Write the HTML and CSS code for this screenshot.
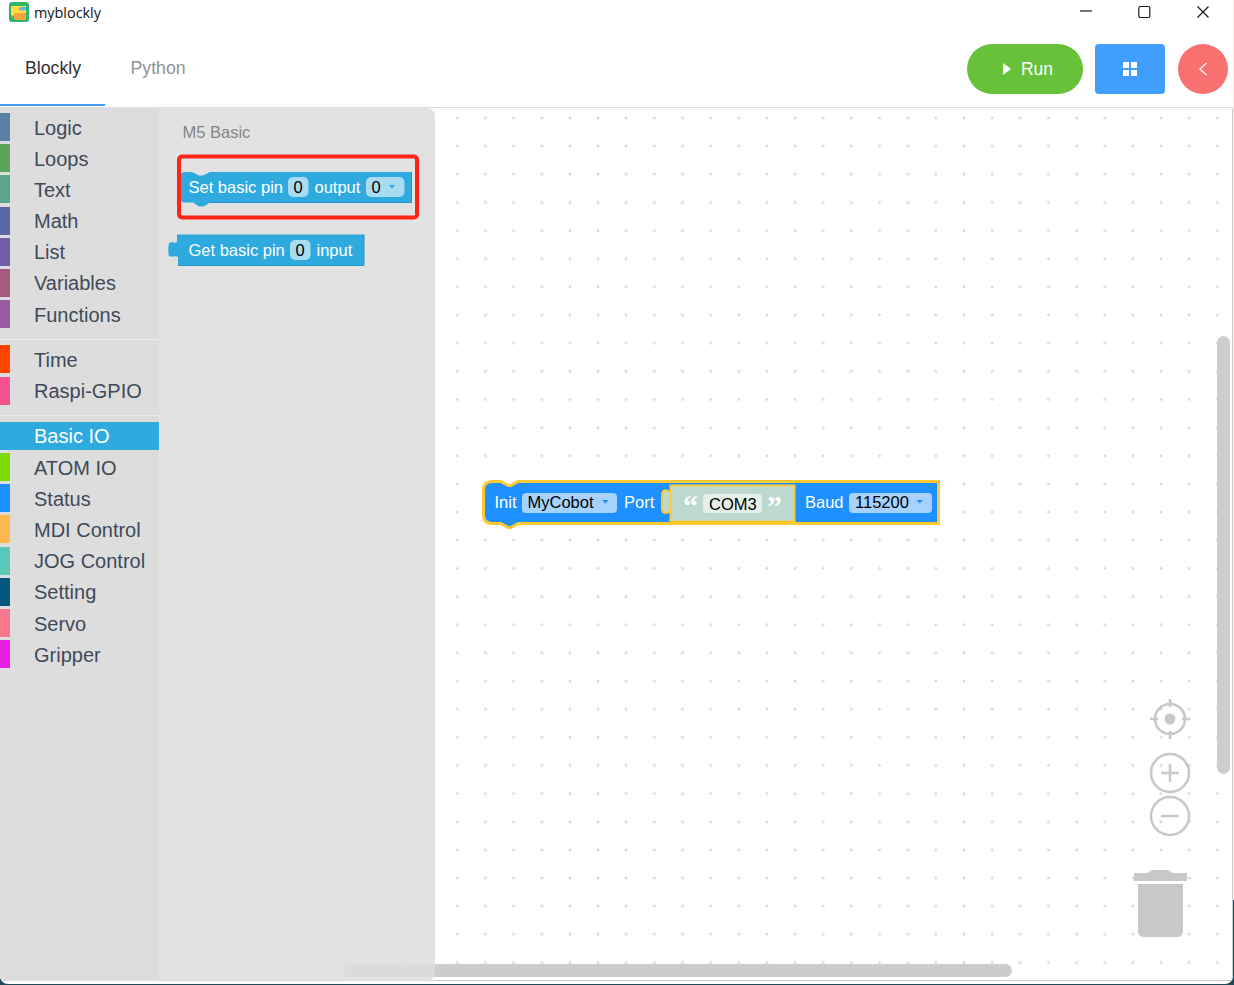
FILE: index.html
```html
<!DOCTYPE html>
<html lang="en">
<head>
<meta charset="utf-8">
<title>myblockly</title>
<link rel="stylesheet" href="styles.css">
</head>
<body>
<div class="window">
  <div class="titlebar">
    <svg class="app-icon" viewBox="0 0 20 20" width="20" height="20">
      <rect width="20" height="20" rx="3" fill="#2fb573"/>
      <path d="M2 4 H17 V13 H5 L3 15 V13 H2 Z" fill="#ffdf3e"/>
      <rect x="10" y="5" width="7" height="3.5" rx="1" fill="#6ab4e0"/>
      <path d="M5 11 H17 V18 H7 Q5 18 5 16 Z" fill="#f4a63b"/>
    </svg>
    <span class="app-name">myblockly</span>
    <div class="win-controls">
      <svg class="win-btn" viewBox="0 0 14 14"><path d="M1 6 H13" /></svg>
      <svg class="win-btn" viewBox="0 0 14 14"><rect x="0.800" y="1.500" width="11" height="11" rx="1.500"/></svg>
      <svg class="win-btn" viewBox="0 0 14 14"><path d="M1.500 1.500 L12.500 12.500 M12.500 1.500 L1.500 12.500"/></svg>
    </div>
  </div>

  <div class="tabbar">
    <div class="tab tab-active">Blockly</div>
    <div class="tab">Python</div>
    <div class="actions">
      <button class="btn btn-run">
        <svg viewBox="0 0 8 12" width="8" height="12"><path d="M0 0 L8 6 L0 12 Z" fill="#fff"/></svg>
        <span>Run</span>
      </button>
      <button class="btn btn-grid">
        <svg viewBox="0 0 14 14" width="14" height="14"><path d="M0 0 H6 V6 H0 Z M8 0 H14 V6 H8 Z M0 8 H6 V14 H0 Z M8 8 H14 V14 H8 Z" fill="#fff"/></svg>
      </button>
      <button class="btn btn-back">
        <svg viewBox="0 0 10 14" width="10" height="14"><path d="M8.500 1 L2 7 L8.500 13" fill="none" stroke="#fff" stroke-width="1.300"/></svg>
      </button>
    </div>
  </div>

  <div class="main">
    <nav class="toolbox">
      <div class="cat"><i class="tag c-logic"></i><span>Logic</span></div>
      <div class="cat"><i class="tag c-loops"></i><span>Loops</span></div>
      <div class="cat"><i class="tag c-text"></i><span>Text</span></div>
      <div class="cat"><i class="tag c-math"></i><span>Math</span></div>
      <div class="cat"><i class="tag c-list"></i><span>List</span></div>
      <div class="cat"><i class="tag c-vars"></i><span>Variables</span></div>
      <div class="cat"><i class="tag c-funcs"></i><span>Functions</span></div>
      <div class="sep"></div>
      <div class="cat"><i class="tag c-time"></i><span>Time</span></div>
      <div class="cat"><i class="tag c-gpio"></i><span>Raspi-GPIO</span></div>
      <div class="sep"></div>
      <div class="cat cat-on"><i class="tag c-basic"></i><span>Basic IO</span></div>
      <div class="cat"><i class="tag c-atom"></i><span>ATOM IO</span></div>
      <div class="cat"><i class="tag c-status"></i><span>Status</span></div>
      <div class="cat"><i class="tag c-mdi"></i><span>MDI Control</span></div>
      <div class="cat"><i class="tag c-jog"></i><span>JOG Control</span></div>
      <div class="cat"><i class="tag c-setting"></i><span>Setting</span></div>
      <div class="cat"><i class="tag c-servo"></i><span>Servo</span></div>
      <div class="cat"><i class="tag c-gripper"></i><span>Gripper</span></div>
    </nav>

    <div class="workspace">
      <svg class="grid" width="100%" height="100%">
        <defs>
          <pattern id="dots" x="16.800" y="10" width="28.150" height="28.150" patternUnits="userSpaceOnUse">
            <path d="M-1.500 0 H1.500 M0 -1.500 V1.500 M26.650 0 H29.650 M28.150 -1.500 V1.500 M-1.500 28.150 H1.500 M0 26.650 V29.650 M26.650 28.150 H29.650 M28.150 26.650 V29.650" stroke="#ccc" stroke-width="1"/>
          </pattern>
        </defs>
        <rect width="100%" height="100%" fill="url(#dots)"/>
      </svg>

      <svg class="init-block" viewBox="479 475 465 60" width="465" height="60">
        <path d="M483.500 490 Q483.500 481.500 492 481.500 H501 l7 4 h3 l7 -4 H938.500 V523.500 H518 l-7 4 h-3 l-7 -4 H492 Q483.500 523.500 483.500 515 Z" fill="#1e90ff" stroke="#ffc933" stroke-width="3"/>
        <text class="bt" x="494.500" y="508">Init</text>
        <rect x="522" y="493" width="95" height="20" rx="4" fill="#a5d2ff"/>
        <text class="ft" x="527.500" y="508">MyCobot</text>
        <path d="M602 500 h6.500 l-3.250 3.500 Z" fill="#1e90ff"/>
        <text class="bt" x="624" y="508">Port</text>
        <path d="M670 492 C666 489 662 490 662 495 V508 C662 514 666 514 670 511" fill="#bdd8cf" stroke="#ffc933" stroke-width="2"/>
        <rect x="670.500" y="485.500" width="124" height="36" fill="#bdd8cf" stroke="#ffc933" stroke-width="2"/>
        <text class="quote" x="683" y="516">“</text>
        <rect x="703" y="494" width="59" height="19" rx="4" fill="#e5f0ec"/>
        <text class="ft" x="709" y="510">COM3</text>
        <text class="quote" x="767" y="516">”</text>
        <text class="bt" x="805" y="508">Baud</text>
        <rect x="849" y="493" width="83" height="20" rx="4" fill="#a5d2ff"/>
        <text class="ft" x="855" y="508">115200</text>
        <path d="M916.500 500 h6.500 l-3.250 3.500 Z" fill="#1e90ff"/>
      </svg>

      <div class="scroll-v"></div>
      <div class="scroll-h"></div>

      <svg class="controls" viewBox="1125 695 70 250" width="70" height="250">
        <g fill="none" stroke="#bbb" stroke-width="2.500">
          <circle cx="1170" cy="719" r="15"/>
          <path d="M1170 699 V707 M1170 731 V739 M1150 719 H1158 M1182 719 H1190"/>
          <circle cx="1170" cy="773" r="19"/>
          <path d="M1170 764 V782 M1161 773 H1179"/>
          <circle cx="1170" cy="816" r="19"/>
          <path d="M1161 816 H1179"/>
        </g>
        <circle cx="1170" cy="719" r="5.500" fill="#bbb"/>
        <path d="M1134 873 H1148 Q1150 870 1153 870 H1167 Q1170 870 1172 873 H1187 V881 H1134 Z" fill="#bbb"/>
        <path d="M1138 884 H1183 V931 Q1183 937 1177 937 H1144 Q1138 937 1138 931 Z" fill="#bbb"/>
      </svg>

      <svg class="flyout" viewBox="159 108 276 873" width="276" height="873">
        <text class="fly-title" x="182.500" y="137.500">M5 Basic</text>

        <path d="M180 177 Q180 172 185 172 H192 l7 3.500 h4 l7 -3.500 H411.500 V202.500 H210 l-6 4 h-5 l-6 -4 H185 Q180 202.500 180 198 Z" fill="#2eaadf"/>
        <path d="M411.500 172 V202.500 H210" fill="none" stroke="#2793c4"/>
        <text class="bt" x="188.500" y="193">Set basic pin</text>
        <rect x="288" y="177" width="20.500" height="20" rx="5" fill="#a9dcf3"/>
        <text class="ft" x="293.500" y="193">0</text>
        <text class="bt" x="314.500" y="193">output</text>
        <rect x="366" y="177" width="38.500" height="20" rx="5" fill="#a9dcf3"/>
        <text class="ft" x="371.500" y="193">0</text>
        <path d="M389 185 h6 l-3 3.500 Z" fill="#2eaadf"/>

        <path d="M177 234.500 H364 V265.500 H178 V257 C175 255 172 258 169 256 Q167.500 250 169 243 C172 241 175 244 177 242 Z" fill="#2eaadf"/>
        <path d="M364 234.500 V265.500 H178" fill="none" stroke="#2793c4"/>
        <text class="bt" x="188.500" y="256">Get basic pin</text>
        <rect x="290" y="240" width="20.500" height="20" rx="5" fill="#a9dcf3"/>
        <text class="ft" x="295.500" y="256">0</text>
        <text class="bt" x="316.500" y="256">input</text>

        <rect x="179" y="156.500" width="238" height="61" rx="3" fill="none" stroke="#ff2318" stroke-width="4"/>
      </svg>
    </div>
  </div>
</div>
</body>
</html>
```

FILE: styles.css
```css
* { box-sizing: border-box; }

html, body {
  margin: 0;
  padding: 0;
  height: 985px;
  overflow: hidden;
}

body {
  background: linear-gradient(to bottom, #f3efe8 0, #f3efe8 900px, #1f4a55 900px);
  font-family: "Liberation Sans", Arial, sans-serif;
}

.window {
  width: 1233px;
  height: 984px;
  background: #fff;
  border-radius: 0 0 8px 8px;
  display: flex;
  flex-direction: column;
  padding-bottom: 3px;
  overflow: hidden;
}

/* Title bar */
.titlebar {
  height: 36px;
  display: flex;
  align-items: flex-start;
  padding: 2px 0 0 9px;
  flex: none;
}

.app-icon { flex: none; }

.app-name {
  margin-left: 5px;
  font: 14.400px/22px "Open Sans", "Noto Sans", sans-serif;
  color: #111;
}

.win-controls {
  margin-left: auto;
  display: flex;
  gap: 44.500px;
  padding: 3px 23px 0 0;
}

.win-btn {
  width: 14px;
  height: 14px;
  fill: none;
  stroke: #1a1a1a;
  stroke-width: 1.200;
}

/* Tab bar */
.tabbar {
  height: 72px;
  flex: none;
  display: flex;
  align-items: flex-start;
  border-bottom: 1px solid #ddd;
}

.tab {
  height: 70px;
  padding: 0 24px 0 25px;
  font-size: 17.700px;
  line-height: 64px;
  color: #909399;
}

.tab + .tab { padding-left: 25.500px; }

.tab-active {
  color: #303133;
  border-bottom: 2px solid #409eff;
}

.actions {
  margin-left: auto;
  display: flex;
  align-items: flex-start;
  gap: 12px;
  padding: 8px 5px 0 0;
}

.btn {
  height: 50px;
  border: 0;
  padding: 0;
  display: flex;
  align-items: center;
  justify-content: center;
  color: #fff;
  font-family: inherit;
}

.btn-run {
  width: 116px;
  padding-left: 6px;
  border-radius: 25px;
  background: #67c23a;
  font-size: 17.500px;
  gap: 10px;
}

.btn-grid {
  width: 70px;
  border-radius: 4px;
  background: #409eff;
}

.btn-back {
  width: 50px;
  border-radius: 50%;
  background: #f97070;
  margin-left: 1px;
}

/* Main area */
.main {
  flex: 1;
  display: flex;
  min-height: 0;
}

.toolbox {
  width: 159px;
  flex: none;
  background: #ddd;
  padding-top: 5px;
}

.cat {
  height: 28px;
  margin-bottom: 3.200px;
  display: flex;
  align-items: center;
  font-size: 20px;
  color: #3e4a5a;
}

.cat span {
  margin-left: 24px;
  padding-top: 2px;
}

.tag {
  width: 10px;
  height: 100%;
  flex: none;
}

.cat-on {
  background: #2eaadf;
  color: #fff;
}

.sep {
  height: 1px;
  margin: 10.500px 0 5.800px;
  background: #ebebeb;
}

.c-logic { background: #5b80a5; }
.c-loops { background: #5ba55b; }
.c-text { background: #5ba58c; }
.c-math { background: #5b67a5; }
.c-list { background: #745ba5; }
.c-vars { background: #a55b80; }
.c-funcs { background: #995ba5; }
.c-time { background: #ff4500; }
.c-gpio { background: #f6528f; }
.c-basic { background: #2eaadf; }
.c-atom { background: #7ed900; }
.c-status { background: #1e90ff; }
.c-mdi { background: #ffb84d; }
.c-jog { background: #5ac8b8; }
.c-setting { background: #00587a; }
.c-servo { background: #f5788c; }
.c-gripper { background: #e91ee3; }

/* Workspace canvas */
.workspace {
  flex: 1;
  position: relative;
  min-width: 0;
  border-right: 1px solid #ccc;
  border-bottom: 1px solid #ccc;
}

.grid {
  position: absolute;
  left: 0;
  top: 0;
}

.init-block {
  position: absolute;
  left: 320px;
  top: 367px;
}

.controls {
  position: absolute;
  left: 966px;
  top: 587px;
  opacity: 0.800;
}

.scroll-v {
  position: absolute;
  left: 1058px;
  top: 228px;
  width: 13px;
  height: 438px;
  border-radius: 7px;
  background: #ccc;
}

.scroll-h {
  position: absolute;
  left: 184px;
  top: 856px;
  width: 669px;
  height: 13px;
  border-radius: 7px;
  background: #ccc;
}

.flyout {
  position: absolute;
  left: 0;
  top: 0;
  border-radius: 0 8px 8px 0;
  background: rgba(221, 221, 221, 0.850);
}

/* Block text */
.bt, .ft, .fly-title {
  font-family: "Liberation Sans", Arial, sans-serif;
  font-size: 16.500px;
}

.bt { fill: #fff; }
.ft { fill: #000; }
.fly-title { fill: #868686; }

.quote {
  font-family: "Liberation Serif", serif;
  font-weight: bold;
  font-size: 30px;
  fill: #fff;
}
```
